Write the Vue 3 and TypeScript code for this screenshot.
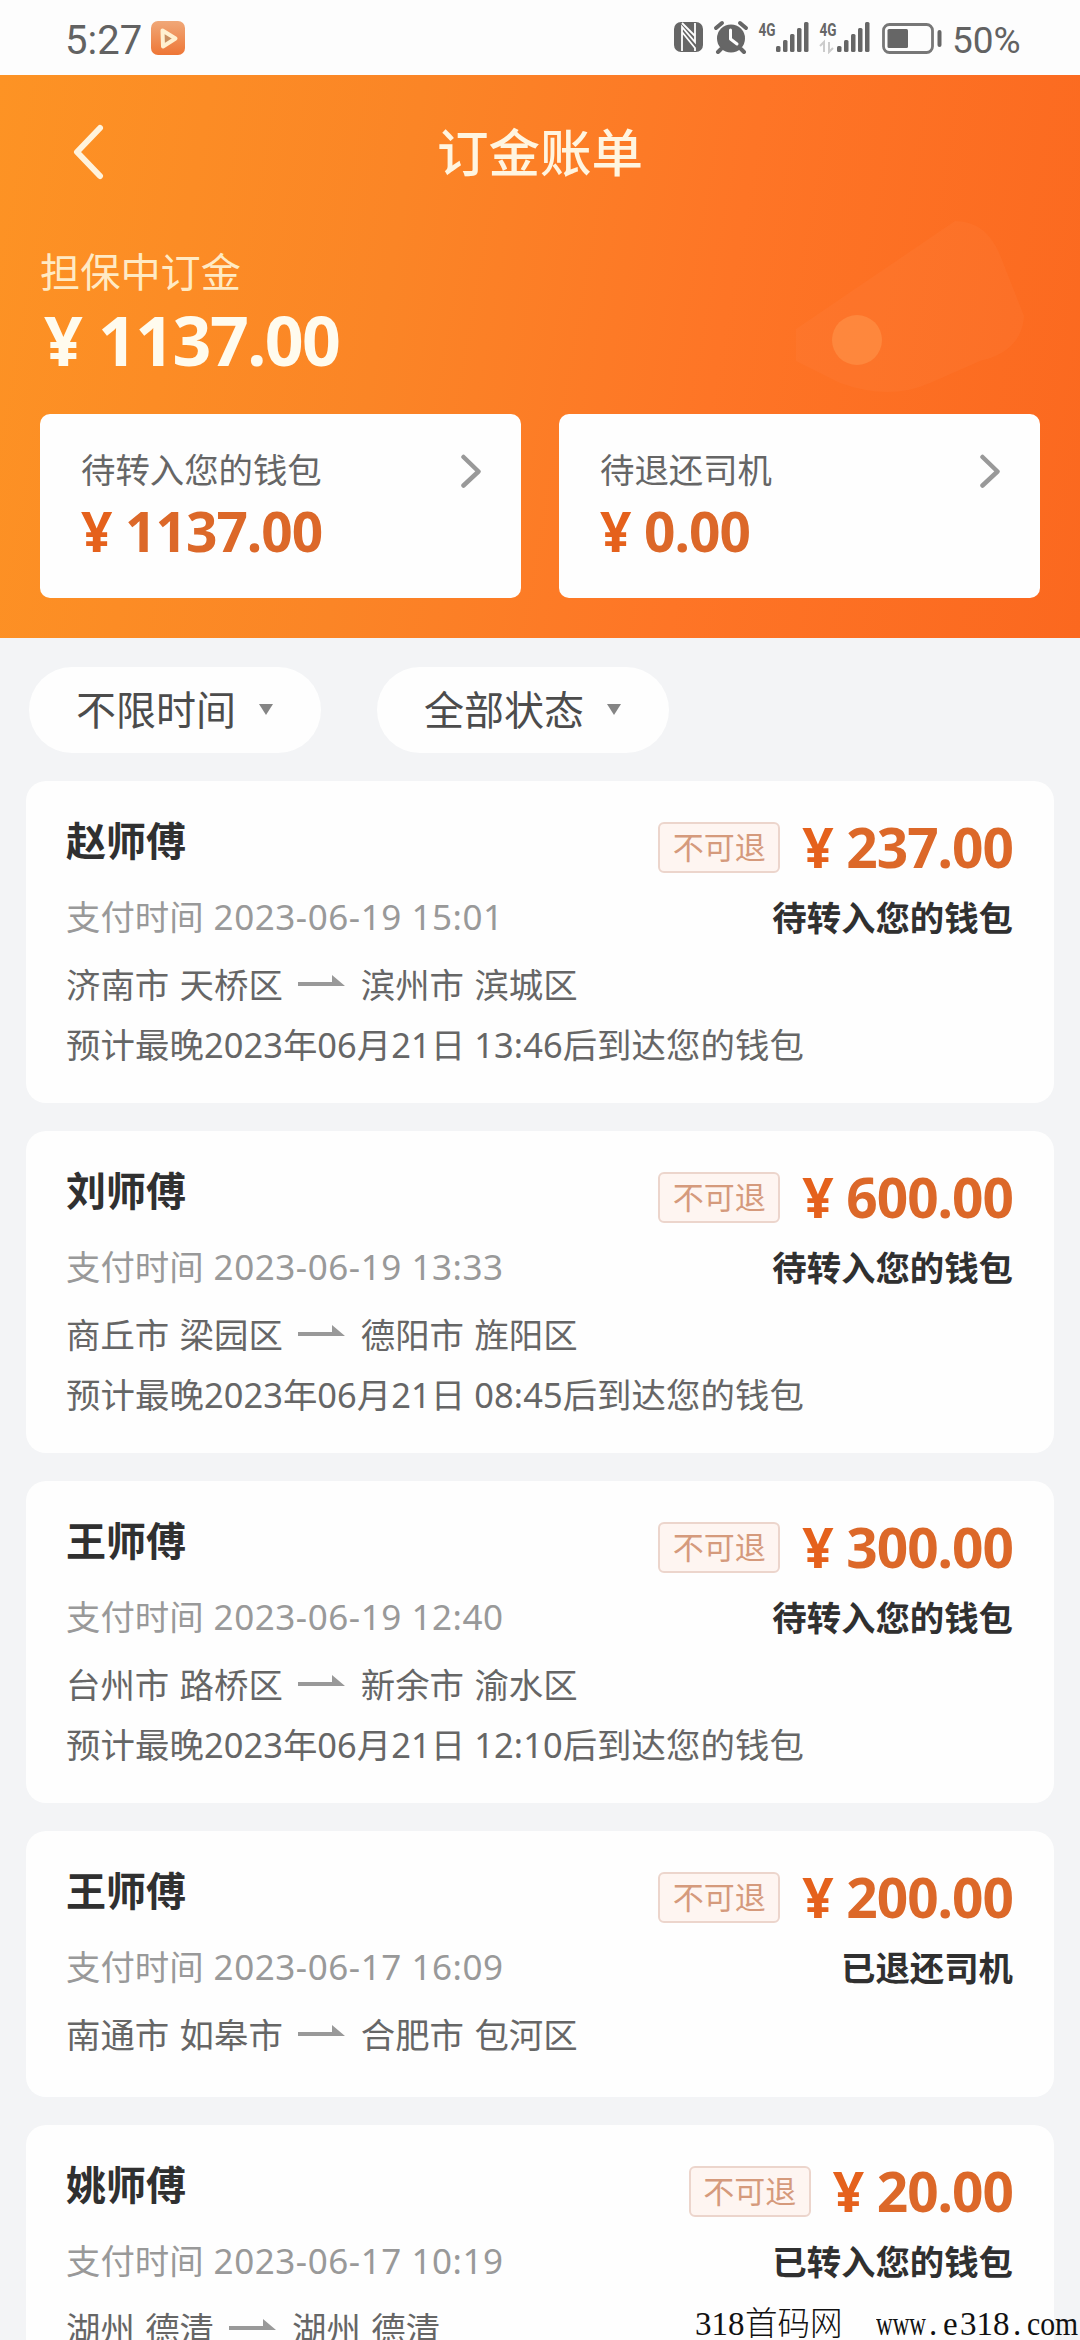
<script setup lang="ts">
interface Bill {
  name: string
  amount: string
  paidAt: string
  status: string
  from: string
  to: string
  note?: string
}

const wallets = [
  { label: '待转入您的钱包', amount: '1137.00' },
  { label: '待退还司机', amount: '0.00' },
]

const filters = ['不限时间', '全部状态']

const bills: Bill[] = [
  {
    name: '赵师傅', amount: '237.00', paidAt: '2023-06-19 15:01', status: '待转入您的钱包',
    from: '济南市 天桥区', to: '滨州市 滨城区', note: '预计最晚2023年06月21日 13:46后到达您的钱包',
  },
  {
    name: '刘师傅', amount: '600.00', paidAt: '2023-06-19 13:33', status: '待转入您的钱包',
    from: '商丘市 梁园区', to: '德阳市 旌阳区', note: '预计最晚2023年06月21日 08:45后到达您的钱包',
  },
  {
    name: '王师傅', amount: '300.00', paidAt: '2023-06-19 12:40', status: '待转入您的钱包',
    from: '台州市 路桥区', to: '新余市 渝水区', note: '预计最晚2023年06月21日 12:10后到达您的钱包',
  },
  {
    name: '王师傅', amount: '200.00', paidAt: '2023-06-17 16:09', status: '已退还司机',
    from: '南通市 如皋市', to: '合肥市 包河区',
  },
  {
    name: '姚师傅', amount: '20.00', paidAt: '2023-06-17 10:19', status: '已转入您的钱包',
    from: '湖州 德清', to: '湖州 德清',
  },
]
</script>

<template>
  <div class="screen">
    <div class="statusbar">
      <span class="clock">5:27</span>
      <svg class="app-icon" width="34" height="34" viewBox="0 0 34 34">
        <defs>
          <linearGradient id="appFill" x1="0" y1="0" x2="0" y2="1">
            <stop offset="0" stop-color="#f0a878" />
            <stop offset="1" stop-color="#ee7636" />
          </linearGradient>
        </defs>
        <rect width="34" height="34" rx="7" fill="url(#appFill)" />
        <path d="M11.500 9.500L24.500 17.500L12 25.500Z" fill="#c98f60" stroke="#fff0d0" stroke-width="4" stroke-linejoin="round" />
      </svg>
      <svg class="indicators" width="270" height="34" viewBox="0 0 270 34">
        <g fill="#666">
          <rect x="0" y="2" width="29" height="30" rx="7" />
          <path d="M8 31V7L21 22V3M8 3L21 16M8 12L21 28V31" fill="none" stroke="#fff" stroke-width="1.800" />
          <circle cx="57" cy="18.500" r="14" />
          <path d="M42 8L48 3M72 8L66 3" stroke="#666" stroke-width="4" stroke-linecap="round" />
          <path d="M47 29L44 32M67 29L70 32" stroke="#666" stroke-width="4" stroke-linecap="round" />
          <path d="M56.500 10V19L63 24" fill="none" stroke="#fff" stroke-width="3" stroke-linecap="round" stroke-linejoin="round" />
          <g v-for="x in [0, 61]" :key="x" :transform="`translate(${x} 0)`">
            <text x="84.500" y="15.500" class="net" textLength="17" lengthAdjust="spacingAndGlyphs">4G</text>
            <rect x="102" y="26" width="4.500" height="6" rx="1.500" />
            <rect x="109" y="20" width="4.500" height="12" rx="1.500" />
            <rect x="116" y="14" width="4.500" height="18" rx="1.500" />
            <rect x="123" y="8" width="4.500" height="24" rx="1.500" />
            <rect x="130" y="2" width="4.500" height="30" rx="1.500" />
          </g>
          <path d="M146 26L150 22V32M155 22V32L159 28" fill="none" stroke="#ccc" stroke-width="2" />
          <rect x="209.500" y="4.500" width="49" height="28" rx="6" fill="none" stroke="#777" stroke-width="2.800" />
          <rect x="213.500" y="9" width="20.500" height="19" rx="1.500" />
          <rect x="263.500" y="10" width="4" height="17" rx="2" />
        </g>
      </svg>
      <span class="percent">50%</span>
    </div>

    <header class="hero">
      <svg class="hero-art" width="260" height="240" viewBox="0 0 260 240">
        <path d="M16 118L175 10Q206 10 220 44L244 105Q242 140 200 150L150 172Q110 190 60 172L16 150Z" fill="#ff8a4a" opacity=".16" />
        <circle cx="77" cy="129" r="25" fill="#ff9a50" opacity=".5" />
      </svg>
      <nav class="nav">
        <svg class="back" width="32" height="56" viewBox="0 0 32 56">
          <path d="M28 4L5 28L28 52" fill="none" stroke="#fff3dc" stroke-width="6" stroke-linecap="round" stroke-linejoin="round" />
        </svg>
        <h1 class="title">订金账单</h1>
      </nav>
      <div class="total-label">担保中订金</div>
      <div class="total"><span class="yen">¥</span>1137.00</div>
      <div class="wallets">
        <section v-for="w in wallets" :key="w.label" class="wallet">
          <div class="wallet-head">
            <span class="wallet-label">{{ w.label }}</span>
            <svg width="22" height="34" viewBox="0 0 22 34">
              <path d="M4.500 3L19.500 17.500L4.500 31.500" fill="none" stroke="#999" stroke-width="4.500" stroke-linecap="round" stroke-linejoin="round" />
            </svg>
          </div>
          <div class="price"><span class="yen">¥</span>{{ w.amount }}</div>
        </section>
      </div>
    </header>

    <div class="filters">
      <button v-for="f in filters" :key="f" class="filter" type="button">
        {{ f }}<i class="caret"></i>
      </button>
    </div>

    <main class="list">
      <article v-for="b in bills" :key="b.paidAt" class="bill">
        <div class="info">
          <h2 class="name">{{ b.name }}</h2>
          <div class="paid">支付时间 <span class="stamp">{{ b.paidAt }}</span></div>
          <div class="route">
            <span>{{ b.from }}</span>
            <svg class="arrow" width="47" height="12" viewBox="0 0 47 12">
              <path d="M0 7H34V0L47 11H0Z" fill="#999" />
            </svg>
            <span>{{ b.to }}</span>
          </div>
          <div v-if="b.note" class="note">{{ b.note }}</div>
        </div>
        <div class="result">
          <div class="result-head">
            <span class="tag">不可退</span>
            <div class="price"><span class="yen">¥</span>{{ b.amount }}</div>
          </div>
          <div class="state">{{ b.status }}</div>
        </div>
      </article>
    </main>

    <div class="mark">
      <span class="mark-num">318</span><span class="mark-cjk">首码网</span>
      <span class="mark-www">www</span><span class="mark-dot">.</span><span class="mark-e">e</span><span class="mark-num">318</span><span class="mark-dot">.</span><span class="mark-com">com</span>
    </div>
  </div>
</template>

<style>
body {
  margin: 0;
  background: #f3f4f6;
}
</style>

<style scoped>
.screen {
  position: relative;
  width: 1080px;
  height: 2340px;
  overflow: hidden;
  background: #f3f4f6;
  color: #666;
  font-family: "Noto Sans", "Noto Sans CJK SC", sans-serif;
  font-size: 34.4px;
}
.statusbar {
  display: flex;
  align-items: flex-start;
  box-sizing: border-box;
  height: 75px;
  padding: 20px 0 0 65px;
  background: #fdfdfd;
  color: #626262;
  font-family: Roboto, sans-serif;
}
.clock {
  width: 86px;
  font-size: 40px;
  line-height: 41px;
}
.app-icon {
  margin-top: 1px;
}
.indicators {
  margin-left: 489px;
}
.net {
  font: bold 18px Roboto, sans-serif;
}
.percent {
  margin-left: 8px;
  font-size: 37px;
  line-height: 41px;
}
.hero {
  position: relative;
  box-sizing: border-box;
  height: 563px;
  padding: 46px 40px 0;
  background: linear-gradient(100deg, #fd9324 0%, #fb8526 36%, #fe7526 65%, #fb681f 100%);
}
.hero-art {
  position: absolute;
  left: 780px;
  top: 136px;
}
.nav {
  display: grid;
  grid-template-columns: 200px 1fr 200px;
  align-items: center;
  height: 62px;
}
.back {
  margin-left: 32px;
}
.title {
  margin: 0;
  color: #fff5e0;
  font-size: 51.5px;
  font-weight: 500;
  line-height: 60px;
  text-align: center;
}
.total-label {
  margin-top: 64px;
  color: #ffeac4;
  font-size: 40.2px;
  line-height: 50px;
}
.total {
  display: flex;
  margin-top: 3px;
  color: #fffbee;
  font-size: 68px;
  font-weight: 700;
  line-height: 80px;
  letter-spacing: -1.6px;
}
.total .yen {
  width: 54px;
  padding-left: 4px;
}
.wallets {
  display: grid;
  grid-template-columns: 1fr 1fr;
  gap: 38px;
  margin-top: 34px;
}
.wallet {
  box-sizing: border-box;
  height: 184px;
  padding: 34px 40px 0 41px;
  border-radius: 10px;
  background: #fefefe;
}
.wallet-head {
  display: flex;
  align-items: center;
  justify-content: space-between;
  height: 46px;
}
.wallet-label {
  height: 46px;
  line-height: 43px;
}
.price {
  display: flex;
  color: #dc6829;
  font-size: 55px;
  font-weight: 700;
  line-height: 60px;
  letter-spacing: -1px;
}
.price .yen {
  width: 44px;
  color: #e5611c;
}
.wallet .price {
  margin-top: 7px;
}
.filters {
  display: flex;
  gap: 56px;
  padding: 29px 0 0 29px;
}
.filter {
  display: flex;
  align-items: center;
  width: 292px;
  height: 86px;
  padding: 0 0 4px 47px;
  border: 0;
  border-radius: 43px;
  background: #fefefe;
  color: #4c4c4c;
  font: inherit;
  font-size: 40px;
}
.caret {
  margin: 3px 0 0 23px;
  border: 7px solid transparent;
  border-top: 11px solid #858585;
  border-bottom: 0;
}
.list {
  display: flex;
  flex-direction: column;
  gap: 28px;
  padding: 28px 26px 0;
}
.bill {
  display: flex;
  justify-content: space-between;
  padding: 32px 41px 36px 40px;
  border-radius: 20px;
  background: #fefefe;
}
.info {
  white-space: nowrap;
}
.name {
  margin: 0;
  color: #303030;
  font-size: 40px;
  font-weight: 700;
  line-height: 56px;
}
.paid {
  display: flex;
  gap: 10px;
  margin-top: 24px;
  color: #999;
  line-height: 48px;
}
.stamp {
  font-size: 35px;
  letter-spacing: 0.55px;
}
.route {
  display: flex;
  align-items: center;
  margin-top: 20px;
  line-height: 48px;
  word-spacing: 1.5px;
}
.route:last-child {
  margin-bottom: 2px;
}
.arrow {
  margin: 0 16px 9px 15px;
}
.note {
  height: 44px;
  margin-top: 14px;
  line-height: 44px;
  letter-spacing: 0.08px;
}
.result {
  display: flex;
  flex-direction: column;
  align-items: flex-end;
  width: 0;
  padding-top: 6px;
  white-space: nowrap;
}
.result-head {
  display: flex;
  align-items: center;
  height: 56px;
}
.tag {
  box-sizing: border-box;
  width: 122px;
  height: 51px;
  margin-right: 22px;
  border: 2px solid #ecd5cc;
  border-radius: 6px;
  background: #fef5f1;
  color: #d59a7c;
  font-size: 31px;
  line-height: 47px;
  text-align: center;
}
.state {
  margin-top: 19px;
  color: #303030;
  font-weight: 700;
  line-height: 48px;
}
/* Site watermark laid over the last card */
.mark {
  position: absolute;
  left: 695px;
  top: 2304px;
  display: flex;
  color: #111;
  font-family: "Liberation Serif", "Noto Sans CJK SC", serif;
  font-size: 33px;
  line-height: 40px;
}
.mark-num {
  width: 50px;
}
.mark-cjk {
  width: 131px;
  font-size: 32.5px;
  font-weight: 300;
}
.mark-www {
  width: 50px;
  transform: scaleX(0.7);
  transform-origin: left;
}
.mark-dot {
  width: 14px;
  padding-left: 3px;
}
.mark-e {
  width: 17px;
}
.mark-com {
  width: 50px;
  transform: scaleX(0.9);
  transform-origin: left;
}
</style>
